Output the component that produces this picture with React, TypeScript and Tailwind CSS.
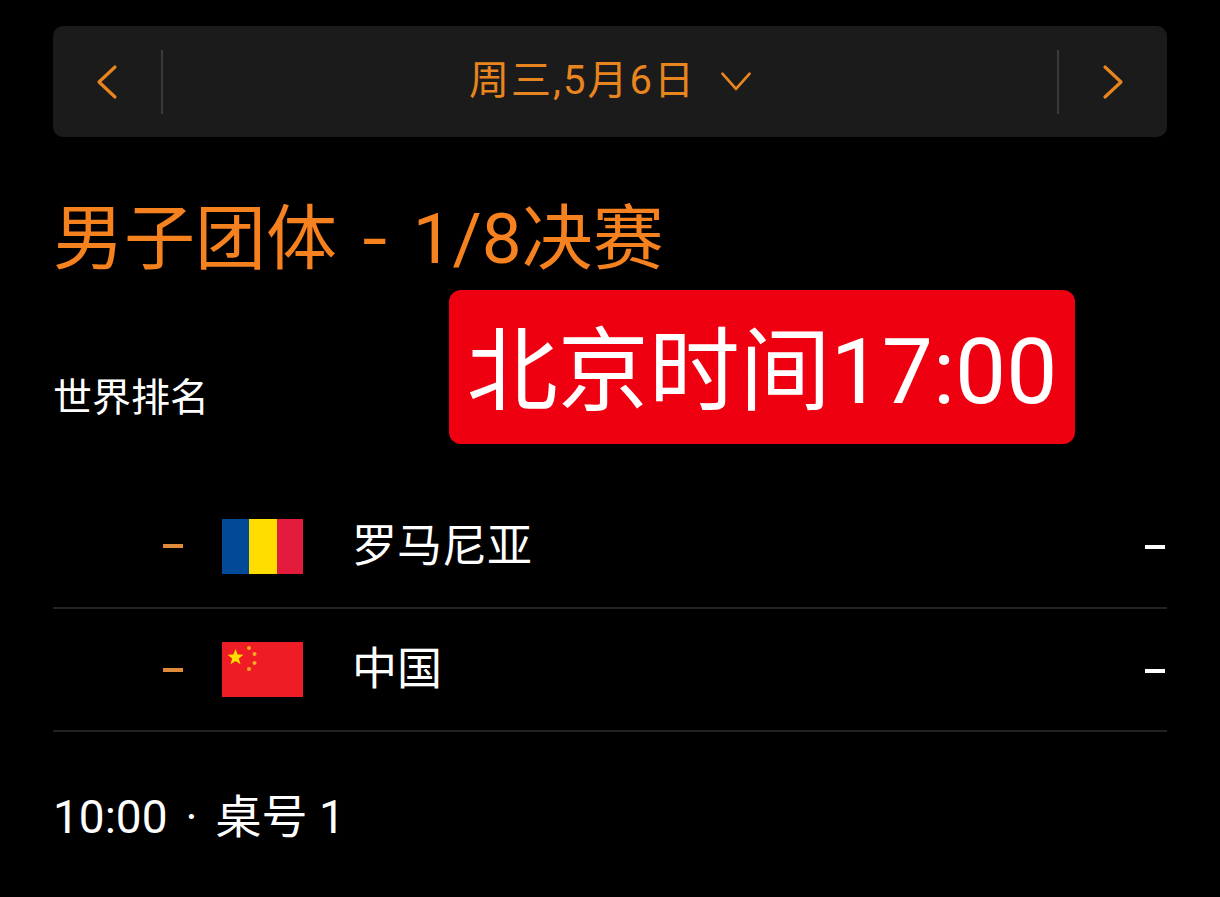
import React from 'react';

const font = { fontFamily: 'Roboto, "Noto Sans CJK SC", "Noto Sans", sans-serif' };

function Chevron({ d, className }: { d: string; className: string }) {
    return (
        <svg viewBox="0 0 40 40" fill="none" className={className}>
            <path d={d} stroke="#e8851f" strokeWidth="3.2" strokeLinecap="round" strokeLinejoin="round" />
        </svg>
    );
}

function RomaniaFlag() {
    return (
        <div className="flex h-[55px] w-[81px] shrink-0">
            <div className="w-[27px] bg-[#004a97]" />
            <div className="w-[28px] bg-[#ffdd00]" />
            <div className="w-[26px] bg-[#e31b3c]" />
        </div>
    );
}

function ChinaFlag() {
    return (
        <svg viewBox="0 0 81 55" className="h-[55px] w-[81px] shrink-0">
            <rect width="81" height="55" fill="#ee1c25" />
            <polygon points="13.5,7 15.6,12.6 21.5,12.8 16.8,16.5 18.5,22.2 13.5,18.9 8.5,22.2 10.2,16.5 5.5,12.8 11.4,12.6" fill="#ffde00" />
            <circle cx="27" cy="6" r="2" fill="#f7a81e" />
            <circle cx="32.5" cy="12" r="2" fill="#f7a81e" />
            <circle cx="32.5" cy="21" r="2" fill="#f7a81e" />
            <circle cx="27" cy="27" r="2" fill="#f7a81e" />
        </svg>
    );
}

function TeamRow({ name, flag, className }: { name: string; flag: React.ReactNode; className: string }) {
    return (
        <div className={`flex items-center border-b-2 border-[#222222] ${className}`}>
            <div className="ml-[110px] h-[4px] w-[20px] bg-[#e08a3c]" />
            <div className="ml-[39px]">{flag}</div>
            <div className="ml-[49px] flex-1 text-[45px] leading-none text-white">{name}</div>
            <div className="mt-[2px] mr-[2px] h-[4px] w-[20px] bg-white" />
        </div>
    );
}

export default function App() {
    return (
        <div className="relative h-[897px] overflow-hidden bg-black px-[53px] pt-[26px]" style={font}>
            <div className="flex h-[111px] items-center rounded-[10px] bg-[#1b1b1b]">
                <div className="flex h-[64px] w-[110px] items-center justify-center border-r-2 border-[#3a3a3a]">
                    <Chevron d="M26 5 L10 20 L26 35" className="ml-[3px] h-[40px] w-[40px]" />
                </div>
                <div className="flex flex-1 items-center justify-center text-[40px] leading-none tracking-[2px] text-[#e8851f]">
                    <span className="mb-[2px] ml-[2px]">周三,5月6日</span>
                    <Chevron d="M4 9 L20 27 L36 9" className="mt-[2px] ml-[23px] h-[34px] w-[34px]" />
                </div>
                <div className="flex h-[64px] w-[110px] items-center justify-center border-l-2 border-[#3a3a3a]">
                    <Chevron d="M14 5 L30 20 L14 35" className="ml-[-4px] h-[40px] w-[40px]" />
                </div>
            </div>

            <h1 className="mt-[60px] text-[71px] leading-[84px] font-normal text-[#f5811f]">
                男子团体<span className="mx-[28px] inline-block scale-x-125">-</span>1/8决赛
            </h1>

            <div className="mt-[89px] text-[39px] leading-[56px] text-white">世界排名</div>

            {/* 盖在页面上的时间标签 */}
            <div className="absolute top-[290px] left-[449px] flex h-[154px] w-[626px] items-center justify-center rounded-[12px] bg-[#ee0011] pt-[11px] text-[91px] leading-none whitespace-nowrap text-white">
                北京时间17:00
            </div>

            <div className="mt-[59px]">
                <TeamRow name="罗马尼亚" flag={<RomaniaFlag />} className="h-[124px]" />
                <TeamRow name="中国" flag={<ChinaFlag />} className="h-[123px]" />
            </div>

            <div className="mt-[55px] text-[46px] leading-[60px] text-white">
                10:00<span className="mx-[18px]">·</span>桌号 1
            </div>
        </div>
    );
}
